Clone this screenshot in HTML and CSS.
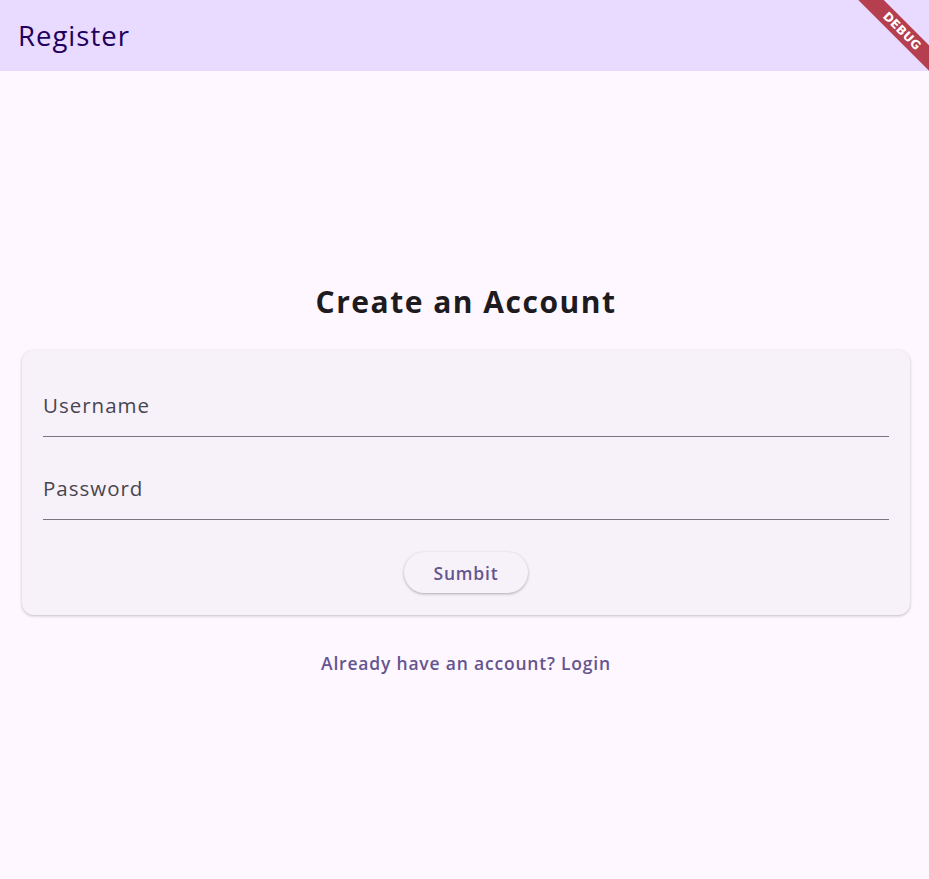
FILE: index.html
```html
<!DOCTYPE html>
<html>
<head>
<meta charset="utf-8">
<link rel="stylesheet" href="styles.css">
</head>
<body>
<header class="appbar">
  <h1 class="appbar-title">Register</h1>
</header>
<div class="debug-banner"><span>DEBUG</span></div>
<main class="page">
  <h2 class="heading">Create an Account</h2>
  <section class="card">
    <div class="field"><span class="field-label">Username</span></div>
    <div class="field field-second"><span class="field-label">Password</span></div>
    <div class="actions"><button class="submit">Sumbit</button></div>
  </section>
  <a class="link">Already have an account? Login</a>
</main>
</body>
</html>
```
FILE: styles.css
```css
* { box-sizing: border-box; }
html, body { margin: 0; padding: 0; }
body {
  width: 929px;
  height: 879px;
  overflow: hidden;
  background: #fef7ff;
  font-family: "Open Sans", "Noto Sans", sans-serif;
  position: relative;
}
.appbar {
  height: 71px;
  background: #e9dbff;
  display: flex;
  align-items: center;
  padding-left: 18px;
}
.appbar-title {
  margin: 0;
  font-weight: 400;
  font-size: 27.5px;
  color: #21005d;
  letter-spacing: 1px;
}
.debug-banner {
  position: absolute;
  top: 22px;
  right: -34px;
  width: 122px;
  height: 18px;
  background: rgba(170, 28, 40, 0.82);
  transform: rotate(45deg);
  display: flex;
  align-items: center;
  justify-content: center;
}
.debug-banner span {
  color: #fff;
  font-family: "DejaVu Sans", sans-serif;
  font-weight: 700;
  font-size: 12px;
  letter-spacing: 0.2px;
}
.page {
  display: flex;
  flex-direction: column;
  align-items: center;
  padding: 0 19px 0 22px;
}
.heading {
  margin: 0;
  margin-top: 210px;
  height: 42px;
  line-height: 42px;
  font-size: 30px;
  font-weight: 700;
  color: #1d1b20;
  letter-spacing: 1.5px;
}
.card {
  margin-top: 27px;
  width: 888px;
  background: #f7f2fa;
  border-radius: 12px;
  box-shadow: 0 1px 3px rgba(0,0,0,0.25);
  padding: 20px 21px 22px;
  display: flex;
  flex-direction: column;
}
.field {
  height: 67px;
  border-bottom: 1.4px solid #7a7580;
  display: flex;
  align-items: center;
  padding-top: 4px;
}
.field-second { margin-top: 16px; }
.field-label {
  font-size: 20.5px;
  color: #49454f;
  letter-spacing: 1px;
}
.actions {
  display: flex;
  justify-content: center;
  margin-top: 32px;
}
.submit {
  height: 41px;
  width: 124px;
  border: none;
  border-radius: 21px;
  background: #f7f2fa;
  box-shadow: 0 1px 3px rgba(0,0,0,0.3);
  color: #65558f;
  font-family: inherit;
  font-size: 17.5px;
  font-weight: 600;
  letter-spacing: 0.8px;
  padding: 0;
}
.link {
  margin-top: 36px;
  font-size: 17.5px;
  font-weight: 600;
  color: #65558f;
  letter-spacing: 0.8px;
}
```
